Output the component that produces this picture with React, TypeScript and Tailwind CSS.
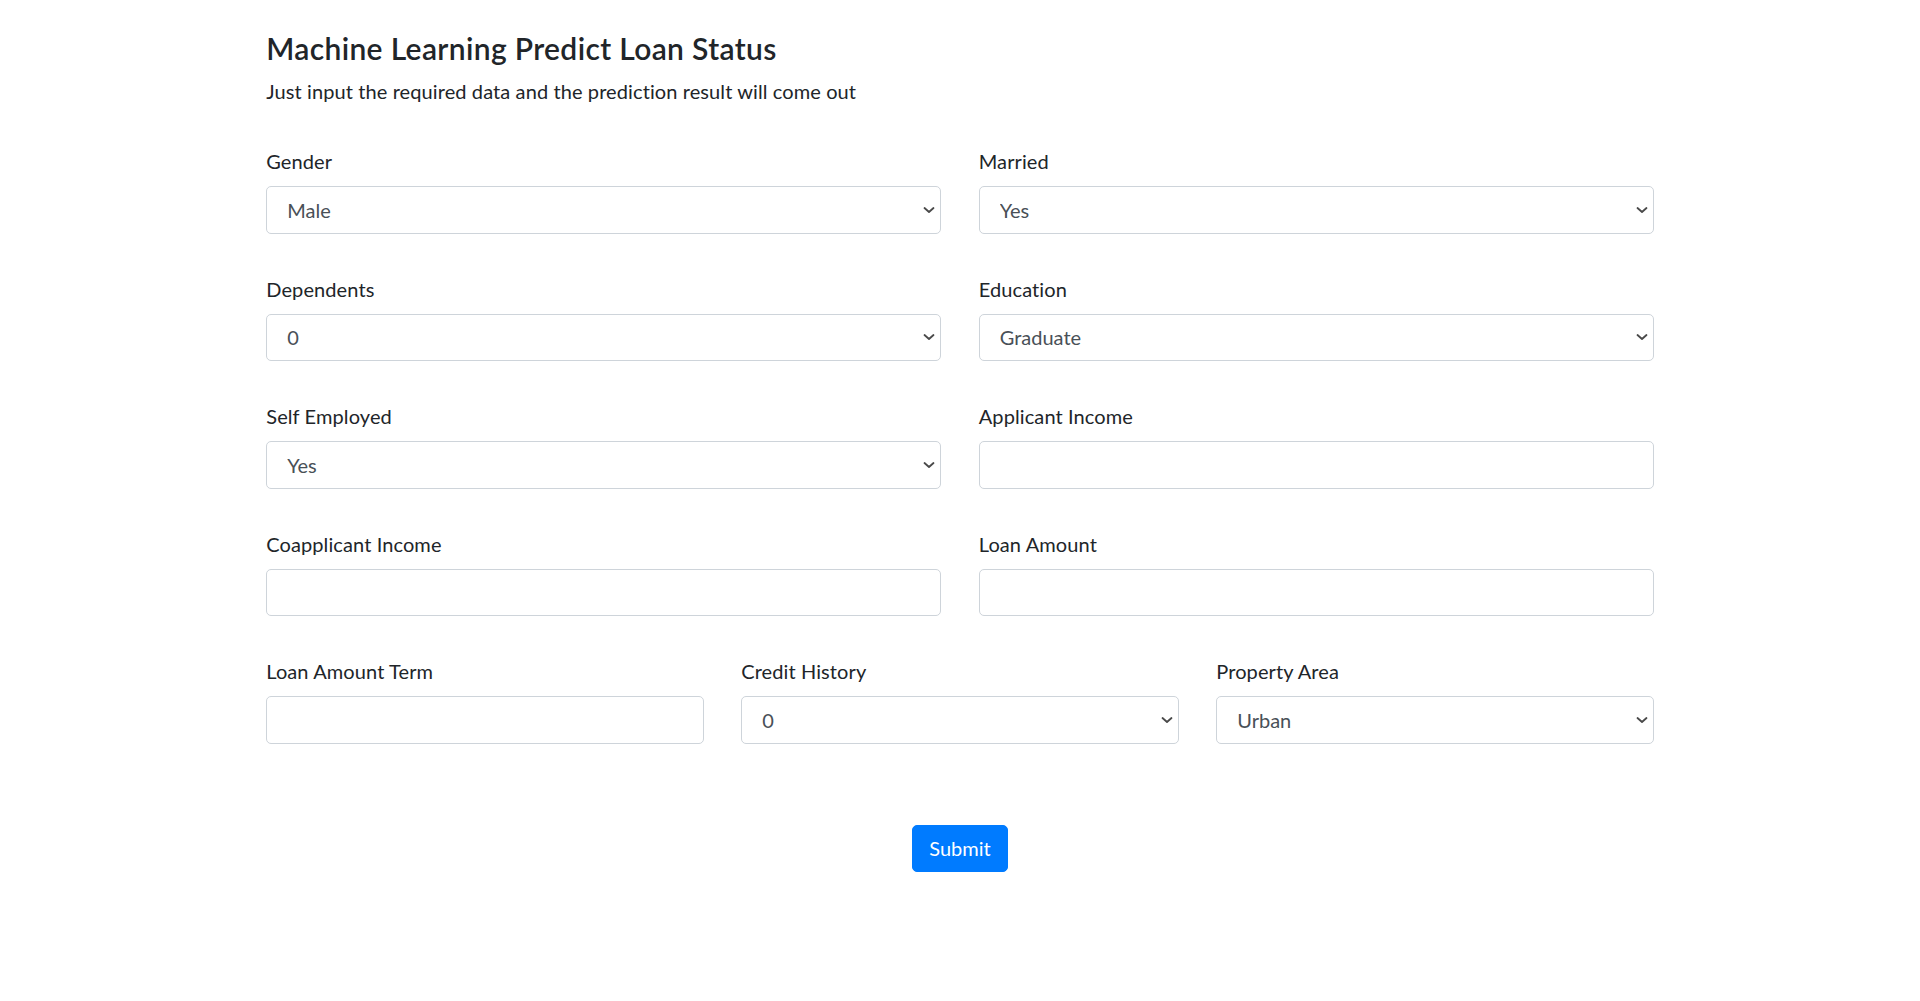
import React from "react";

const font = { fontFamily: "Lato, 'Liberation Sans', sans-serif" };

function Chevron() {
  return (
    <svg
      className="pointer-events-none absolute right-[6px] top-1/2 -translate-y-1/2"
      width="12"
      height="7"
      viewBox="0 0 12 7"
      fill="none"
    >
      <path d="M1.5 1.5 L6 5.5 L10.5 1.5" stroke="#4a4a4a" strokeWidth="1.8" strokeLinecap="round" strokeLinejoin="round" />
    </svg>
  );
}

function SelectField({ label, value, options }: { label: string; value: string; options: string[] }) {
  return (
    <div className="mb-[40px]">
      <label className="block h-[30px] leading-[30px] mb-[10px] text-[20px] text-[#212529] tracking-[0.1px]">{label}</label>
      <div className="relative">
        <select
          defaultValue={value}
          className="block w-full h-[47.5px] appearance-none bg-white border border-[#ced4da] rounded-[5px] pl-[20px] pr-[30px] text-[20px] text-[#495057] outline-none"
          style={font}
        >
          {options.map((o) => (
            <option key={o} value={o}>
              {o}
            </option>
          ))}
        </select>
        <Chevron />
      </div>
    </div>
  );
}

function InputField({ label }: { label: string }) {
  return (
    <div className="mb-[40px]">
      <label className="block h-[30px] leading-[30px] mb-[10px] text-[20px] text-[#212529] tracking-[0.1px]">{label}</label>
      <input
        type="text"
        className="block w-full h-[47.5px] bg-white border border-[#ced4da] rounded-[5px] px-[15px] text-[20px] text-[#495057] outline-none"
        style={font}
      />
    </div>
  );
}

export default function App() {
  return (
    <div className="min-h-[1001px] bg-white" style={font}>
      <div className="mx-auto w-[1425px] px-[18.75px] pt-[30px]">
        <h4 className="text-[30px] leading-[36px] font-semibold text-[#212529] mb-[10px] tracking-[0.35px]">
          Machine Learning Predict Loan Status
        </h4>
        <p className="text-[20px] leading-[30px] text-[#212529] mb-[40px] tracking-[0.1px]">
          Just input the required data and the prediction result will come out
        </p>
        <form onSubmit={(e) => e.preventDefault()}>
          <div className="grid grid-cols-2 gap-x-[37.5px]">
            <SelectField label="Gender" value="Male" options={["Male", "Female"]} />
            <SelectField label="Married" value="Yes" options={["Yes", "No"]} />
            <SelectField label="Dependents" value="0" options={["0", "1", "2", "3+"]} />
            <SelectField label="Education" value="Graduate" options={["Graduate", "Not Graduate"]} />
            <SelectField label="Self Employed" value="Yes" options={["Yes", "No"]} />
            <InputField label="Applicant Income" />
            <InputField label="Coapplicant Income" />
            <InputField label="Loan Amount" />
          </div>
          <div className="grid grid-cols-3 gap-x-[37.5px]">
            <InputField label="Loan Amount Term" />
            <SelectField label="Credit History" value="0" options={["0", "1"]} />
            <SelectField label="Property Area" value="Urban" options={["Urban", "Semiurban", "Rural"]} />
          </div>
          <div className="flex justify-center pt-[41px]">
            <button
              type="submit"
              className="h-[47.5px] px-[16px] rounded-[5px] bg-[#007bff] border border-[#007bff] text-white text-[20px] leading-[30px]"
              style={font}
            >
              Submit
            </button>
          </div>
        </form>
      </div>
    </div>
  );
}
